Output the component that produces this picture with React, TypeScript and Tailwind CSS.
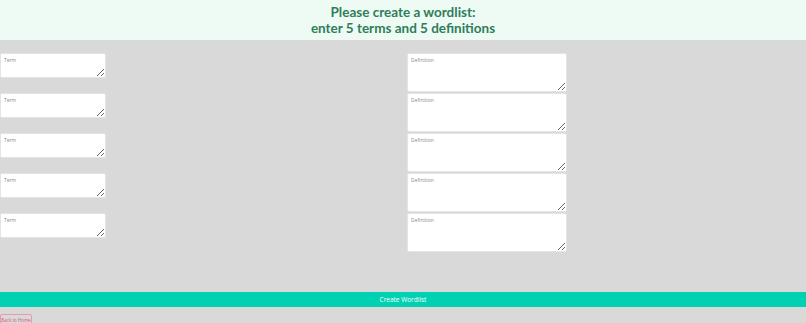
import React from "react";

function Field({ placeholder, cls }: { placeholder: string; cls: string }) {
  return (
    <textarea
      placeholder={placeholder}
      className={
        "block bg-white border border-[#e4e4e4] rounded-[2px] px-[3px] py-[3px] text-[5px] leading-[7px] text-[#363636] placeholder:text-[#8a8a8a] outline-none " +
        cls
      }
      style={{ fontFamily: "'Open Sans', sans-serif" }}
    />
  );
}

export default function App() {
  const items = [0, 1, 2, 3, 4];
  return (
    <div className="w-[806px] h-[323px] overflow-hidden bg-[#d9d9d9]" style={{ fontFamily: "'Open Sans', sans-serif" }}>
      <header className="h-[40px] bg-[#eefaf4] flex flex-col items-center justify-center">
        <h1 className="text-[13.5px] leading-[16px] font-bold text-[#2e7d5a] text-center" style={{ fontFamily: "Lato, sans-serif" }}>
          Please create a wordlist:
          <br />
          enter 5 terms and 5 definitions
        </h1>
      </header>
      <div className="grid grid-cols-2 pt-[13px] h-[252px]">
        <div className="flex flex-col gap-[15px]">
          {items.map((i) => (
            <Field key={i} placeholder="Term" cls="w-[106px] h-[25px]" />
          ))}
        </div>
        <div className="flex flex-col gap-[1px] pl-[4px]">
          {items.map((i) => (
            <Field key={i} placeholder="Definition" cls="w-[160px] h-[39px]" />
          ))}
        </div>
      </div>
      <button className="block w-full h-[15px] bg-[#00d1b2] text-white text-[6.5px] leading-[15px] text-center">
        Create Wordlist
      </button>
      <button className="mt-[7px] ml-0 block h-[12px] w-[32px] px-0 border border-[#e89aac] rounded-[2px] text-[#d1607c] text-[4.5px] leading-[10px] bg-transparent whitespace-nowrap">
        Back to Home
      </button>
    </div>
  );
}
